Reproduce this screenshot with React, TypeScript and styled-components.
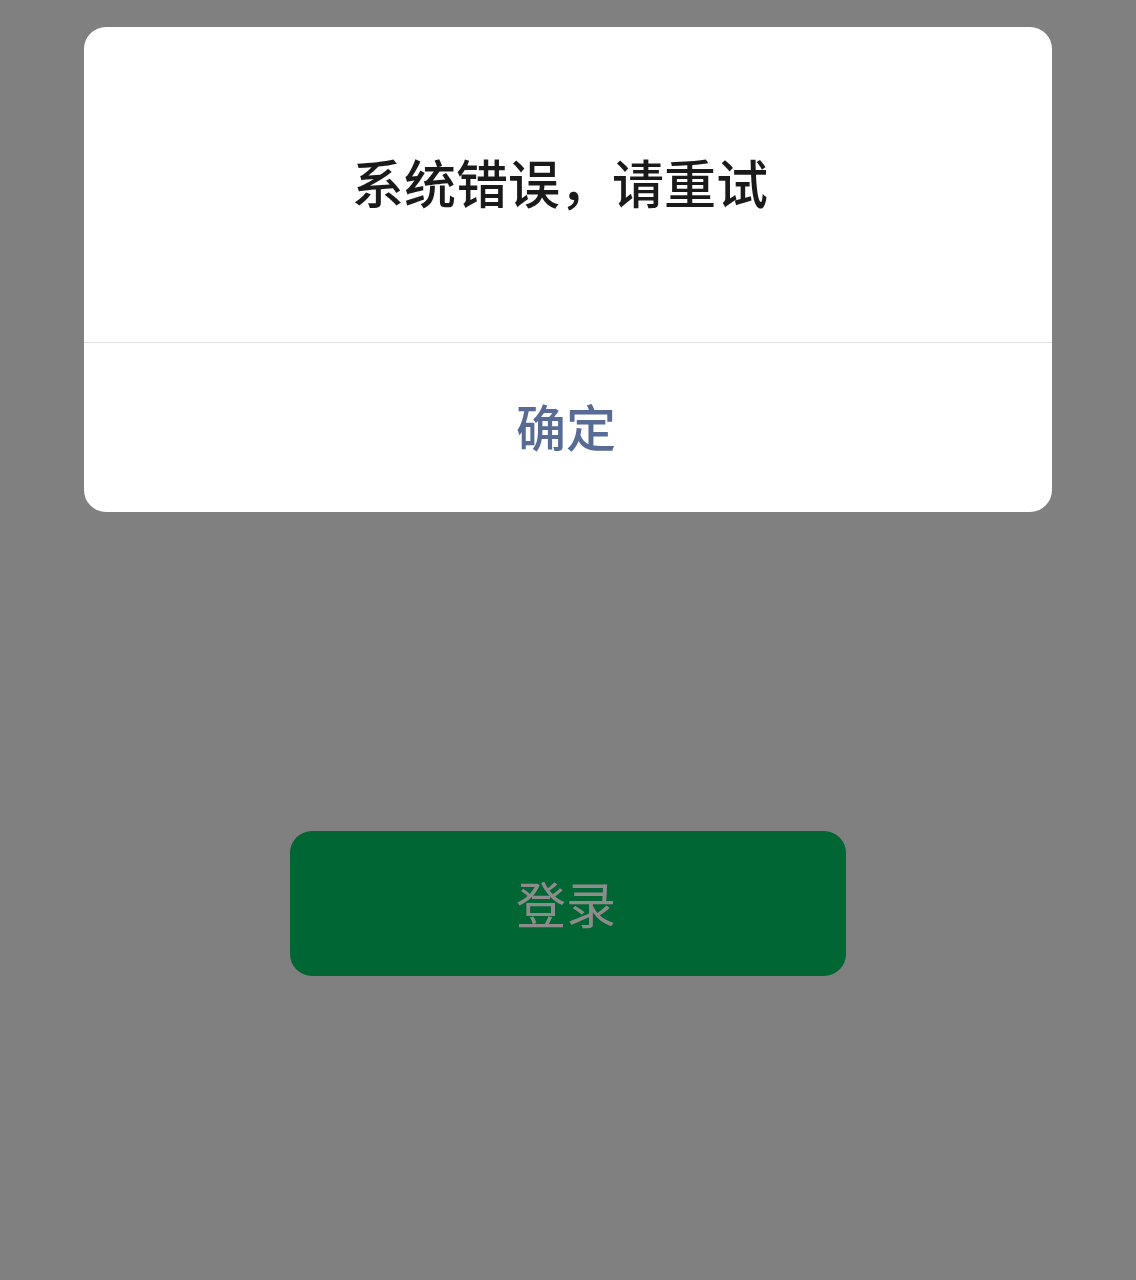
import styled, { createGlobalStyle } from "styled-components";

const GlobalStyle = createGlobalStyle`
  html, body {
    margin: 0;
    padding: 0;
    background: #808080;
  }
  body {
    font-family: "Noto Sans CJK SC", "Noto Sans", sans-serif;
  }
`;

const Page = styled.div`
  position: relative;
  width: 1136px;
  height: 1280px;
  background: #808080;
  display: flex;
  flex-direction: column;
  align-items: center;
  padding-top: 831px;
  box-sizing: border-box;
`;

const LoginButton = styled.button`
  width: 556px;
  height: 145px;
  border: none;
  border-radius: 22px;
  background: #006633;
  color: #8c8c8c;
  font-family: "Noto Sans CJK SC", sans-serif;
  font-size: 50px;
  font-weight: 400;
  line-height: 1;
  display: flex;
  align-items: center;
  justify-content: center;
  padding: 0 4px 4px 0;
`;

const Dialog = styled.div`
  position: absolute;
  top: 27px;
  left: 84px;
  width: 968px;
  background: #ffffff;
  border-radius: 22px;
  overflow: hidden;
  display: flex;
  flex-direction: column;
`;

const DialogBody = styled.div`
  height: 316px;
  display: flex;
  align-items: center;
  justify-content: center;
  border-bottom: 1px solid #e3e3e3;
  box-sizing: border-box;
  padding: 0 16px 6px 0;
`;

const Title = styled.div`
  font-size: 52px;
  font-weight: 500;
  color: #1a1a1a;
  line-height: 1;
`;

const DialogAction = styled.div`
  height: 169px;
  display: flex;
  align-items: center;
  justify-content: center;
  padding: 0 4px 6px 0;
  box-sizing: border-box;
  font-size: 50px;
  font-weight: 500;
  color: #576b95;
  line-height: 1;
`;

export default function App() {
  return (
    <>
      <GlobalStyle />
      <Page>
        <LoginButton>登录</LoginButton>
        <Dialog>
          <DialogBody>
            <Title>系统错误，请重试</Title>
          </DialogBody>
          <DialogAction>确定</DialogAction>
        </Dialog>
      </Page>
    </>
  );
}
